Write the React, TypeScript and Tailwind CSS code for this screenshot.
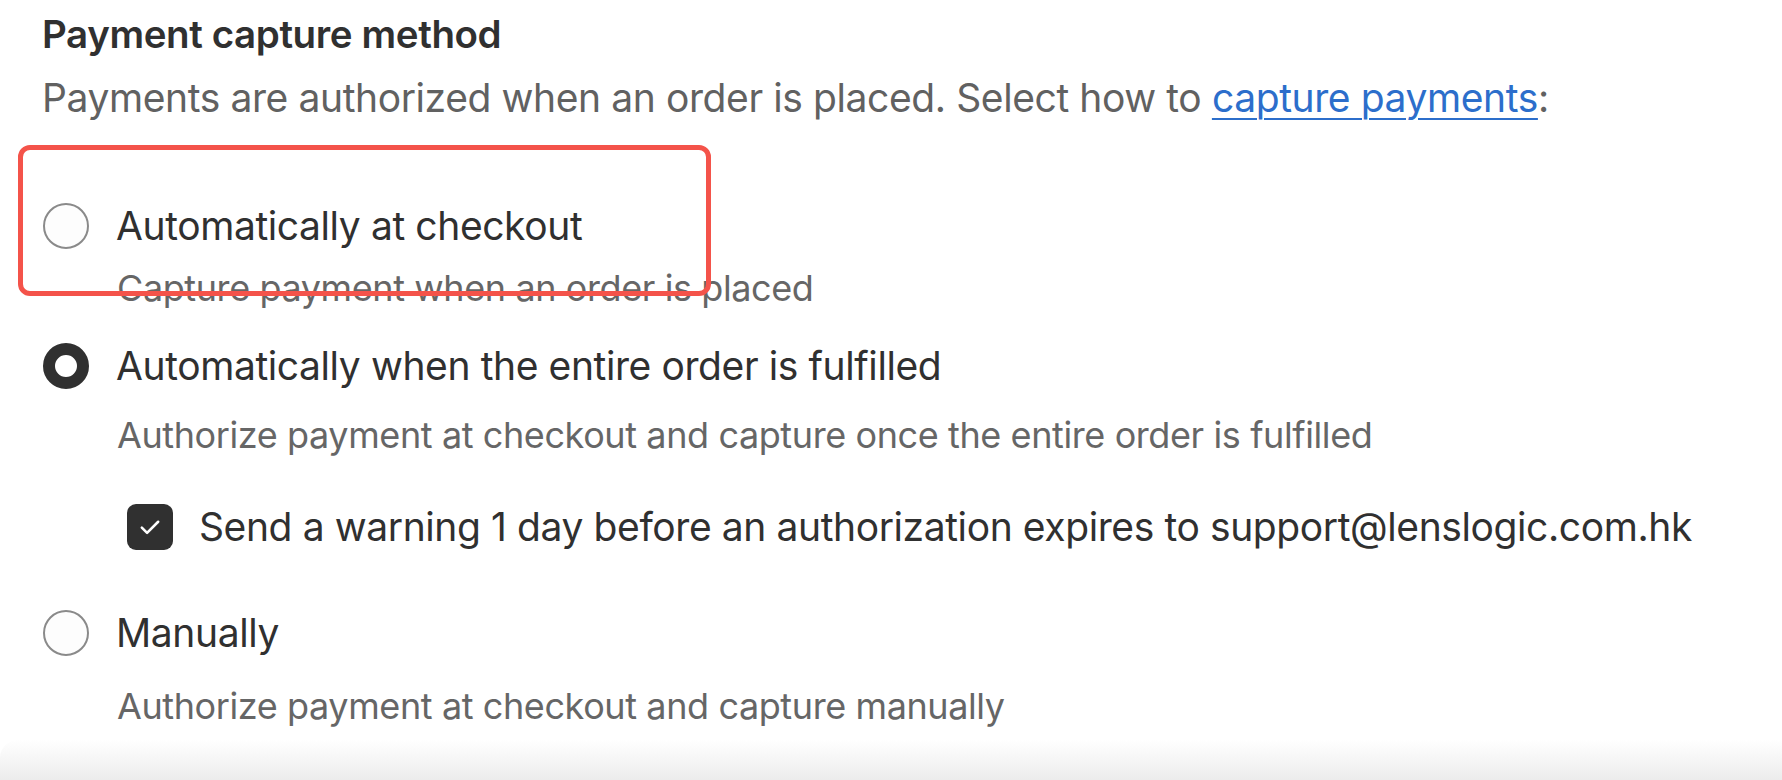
import React from "react";

const font = { fontFamily: "Inter, 'Noto Sans', sans-serif" };

function Radio({ checked }: { checked?: boolean }) {
  return checked ? (
    <span className="box-border block h-[46px] w-[46px] shrink-0 rounded-full border-[12px] border-[#303030] bg-white" />
  ) : (
    <span className="box-border block h-[46px] w-[46px] shrink-0 rounded-full border-2 border-[#8a8a8a] bg-[#fdfdfd]" />
  );
}

function Checkbox() {
  return (
    <span className="flex h-[46px] w-[46px] shrink-0 items-center justify-center rounded-[9px] bg-[#303030]">
      <svg width="28" height="28" viewBox="0 0 24 24" fill="none">
        <path d="M5 12.5l4.5 4.5L19 7.5" stroke="white" strokeWidth="2.2" strokeLinecap="round" strokeLinejoin="round" />
      </svg>
    </span>
  );
}

export default function App() {
  return (
    <div className="relative flex h-[780px] w-full flex-col overflow-hidden bg-white text-[#303030]" style={font}>
      <div className="flex flex-col pl-[42px] pt-[10px]">
        <div className="h-[48px] whitespace-nowrap text-[38.5px] font-semibold leading-[48px] tracking-[-0.4px] text-[#303030]">
          Payment capture method
        </div>
        <div className="mt-[16px] h-[48px] whitespace-nowrap text-[39px] leading-[48px] tracking-[-0.4px] text-[#616161]">
          Payments are authorized when an order is placed. Select how to{" "}
          <span className="text-[#2c6ecb] underline decoration-[2px] underline-offset-[6px]">capture payments</span>:
        </div>

        {/* Option 1 */}
        <div className="mt-[80px] flex h-[48px] items-center gap-[27px] pl-[1px]">
          <Radio />
          <span className="whitespace-nowrap text-[39px] leading-[48px] tracking-[-0.4px]">Automatically at checkout</span>
        </div>
        <div className="mt-[14px] h-[48px] whitespace-nowrap pl-[75px] text-[36px] leading-[48px] tracking-[-0.4px] text-[#666666]">
          Capture payment when an order is placed
        </div>

        {/* Option 2 */}
        <div className="mt-[30px] flex h-[48px] items-center gap-[27px] pl-[1px]">
          <Radio checked />
          <span className="whitespace-nowrap text-[39px] leading-[48px] tracking-[-0.4px]">
            Automatically when the entire order is fulfilled
          </span>
        </div>
        <div className="mt-[21px] h-[48px] whitespace-nowrap pl-[75px] text-[36px] leading-[48px] tracking-[-0.4px] text-[#666666]">
          Authorize payment at checkout and capture once the entire order is fulfilled
        </div>

        <div className="mt-[44px] flex h-[48px] items-center gap-[26px] pl-[85px]">
          <Checkbox />
          <span className="whitespace-nowrap text-[39px] leading-[48px] tracking-[-0.4px]">
            Send a warning 1 day before an authorization expires to support@lenslogic.com.hk
          </span>
        </div>

        {/* Option 3 */}
        <div className="mt-[58px] flex h-[48px] items-center gap-[27px] pl-[1px]">
          <Radio />
          <span className="whitespace-nowrap text-[39px] leading-[48px] tracking-[-0.4px]">Manually</span>
        </div>
        <div className="mt-[25px] h-[48px] whitespace-nowrap pl-[75px] text-[36px] leading-[48px] tracking-[-0.4px] text-[#666666]">
          Authorize payment at checkout and capture manually
        </div>
      </div>

      <div className="flex-1" />
      <div className="h-[40px] shrink-0 rounded-tl-[18px] bg-gradient-to-b from-white to-[#ececec]" />

      {/* annotation box */}
      <div className="pointer-events-none absolute left-[18px] top-[145px] h-[151px] w-[693px] rounded-[12px] border-[5px] border-[#f4534a]" />
    </div>
  );
}
